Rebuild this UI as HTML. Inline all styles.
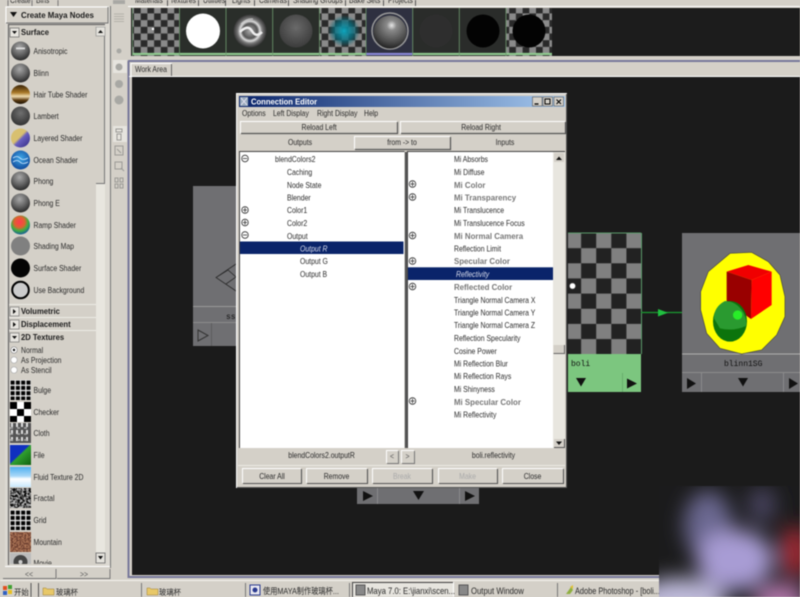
<!DOCTYPE html>
<html><head><meta charset="utf-8"><style>
html,body{margin:0;padding:0;background:#d4d0c8;width:800px;height:597px;overflow:hidden}
svg{display:block;filter:blur(.4px)}
text{font-family:"Liberation Sans","Noto Sans CJK SC",sans-serif;font-size:8.3px;fill:#2a2a2a;transform-box:fill-box;transform-origin:0 50%;transform:scaleX(.83)}
text.b{font-weight:bold;transform:scaleX(.92);fill:#1c1c1c}
text.g{font-weight:bold;fill:#777;transform:scaleX(.95)}
text.w{fill:#d8dcec;font-style:italic}
text.m{font-family:"Liberation Mono",monospace;font-size:8px;transform:none;fill:#111}
text.c{text-anchor:middle;transform-origin:50% 50%}
text.cjk{font-size:8px;transform:scaleX(.92)}
</style></head><body>
<svg width="800" height="597" viewBox="0 0 800 597" xmlns="http://www.w3.org/2000/svg">
<defs>
<radialGradient id="s1" cx=".45" cy=".3" r=".75"><stop offset="0" stop-color="#a8a8a8"/><stop offset=".55" stop-color="#606060"/><stop offset="1" stop-color="#202020"/></radialGradient>
<radialGradient id="s2" cx=".5" cy=".35" r=".7"><stop offset="0" stop-color="#707070"/><stop offset="1" stop-color="#2e2e2e"/></radialGradient>
<linearGradient id="hair" x1="0" y1="0" x2="0" y2="1"><stop offset="0" stop-color="#3a2408"/><stop offset=".4" stop-color="#a87828"/><stop offset=".6" stop-color="#f0dcb0"/><stop offset=".8" stop-color="#5a3a10"/><stop offset="1" stop-color="#1a1004"/></linearGradient>
<linearGradient id="lay" x1="0" y1="0" x2="1" y2="1"><stop offset="0" stop-color="#d8c070"/><stop offset=".45" stop-color="#d8c070"/><stop offset=".55" stop-color="#6a60c0"/><stop offset="1" stop-color="#302880"/></linearGradient>
<radialGradient id="ocean" cx=".5" cy=".4" r=".7"><stop offset="0" stop-color="#40a8e8"/><stop offset="1" stop-color="#0a3c90"/></radialGradient>
<radialGradient id="ramp" cx=".45" cy=".35" r=".7"><stop offset="0" stop-color="#ff3a50"/><stop offset=".4" stop-color="#e06030"/><stop offset=".65" stop-color="#40b040"/><stop offset="1" stop-color="#1048b0"/></radialGradient>
<radialGradient id="sw" cx=".55" cy=".3" r=".75"><stop offset="0" stop-color="#e8e8e8"/><stop offset=".2" stop-color="#8a8a8a"/><stop offset=".7" stop-color="#484848"/><stop offset="1" stop-color="#181818"/></radialGradient>
<radialGradient id="sg" cx=".5" cy=".4" r=".6"><stop offset="0" stop-color="#6a6a6a"/><stop offset="1" stop-color="#3c3c3c"/></radialGradient>
<radialGradient id="teal" cx=".5" cy=".5" r=".5"><stop offset="0" stop-color="#10a8c0"/><stop offset=".6" stop-color="#0a6a7a" stop-opacity=".8"/><stop offset="1" stop-color="#0a6a7a" stop-opacity="0"/></radialGradient>
<radialGradient id="env" cx=".5" cy=".5" r=".5"><stop offset="0" stop-color="#aaa"/><stop offset=".45" stop-color="#555"/><stop offset=".6" stop-color="#ddd"/><stop offset=".75" stop-color="#777"/><stop offset="1" stop-color="#333"/></radialGradient>
<linearGradient id="title" x1="0" y1="0" x2="1" y2="0"><stop offset="0" stop-color="#0a246a"/><stop offset="1" stop-color="#a6caf0"/></linearGradient>
<linearGradient id="file" x1="0" y1="0" x2="1" y2="1"><stop offset="0" stop-color="#1030c0"/><stop offset=".45" stop-color="#1030c0"/><stop offset=".5" stop-color="#30a030"/><stop offset="1" stop-color="#106010"/></linearGradient>
<linearGradient id="fluid" x1="0" y1="0" x2="0" y2="1"><stop offset="0" stop-color="#50b0f0"/><stop offset=".45" stop-color="#a8d8f8"/><stop offset=".6" stop-color="#fff"/><stop offset="1" stop-color="#c8e8fc"/></linearGradient>
<pattern id="ck" x="568" y="233" width="30.2" height="30.3" patternUnits="userSpaceOnUse"><rect width="30.2" height="30.3" fill="#222"/><rect x="-2" width="15.1" height="15.15" fill="#808080"/><rect x="28.2" width="2" height="15.15" fill="#808080"/><rect x="13.1" y="15.15" width="15.1" height="15.15" fill="#808080"/></pattern>
<pattern id="ckS" width="13.4" height="13.4" patternUnits="userSpaceOnUse"><rect width="13.4" height="13.4" fill="#2a2a2a"/><rect width="6.7" height="6.7" fill="#8a8a8a"/><rect x="6.7" y="6.7" width="6.7" height="6.7" fill="#8a8a8a"/></pattern>
<pattern id="ckT" x="10" y="402" width="14" height="14" patternUnits="userSpaceOnUse"><rect width="14" height="14" fill="#fff"/><rect width="7" height="7" fill="#000"/><rect x="7" y="7" width="7" height="7" fill="#000"/></pattern>
<pattern id="grid" x="10" y="380" width="5.3" height="5.3" patternUnits="userSpaceOnUse"><rect width="5.3" height="5.3" fill="#eee"/><rect x=".6" y=".6" width="4" height="4" fill="#000"/></pattern>
<pattern id="grid2" x="10" y="510" width="5.3" height="5.3" patternUnits="userSpaceOnUse"><rect width="5.3" height="5.3" fill="#eee"/><rect x=".6" y=".6" width="4" height="4" fill="#000"/></pattern>
<filter id="noise1" x="0" y="0" width="100%" height="100%"><feTurbulence type="fractalNoise" baseFrequency=".45" numOctaves="2" seed="3"/><feColorMatrix values="0 0 0 0 0 0 0 0 0 0 0 0 0 0 0 3 0 0 0 -1"/></filter>
<filter id="noise2" x="0" y="0" width="100%" height="100%"><feTurbulence type="fractalNoise" baseFrequency=".6" numOctaves="2" seed="8"/><feColorMatrix values="0 0 0 0 .15 0 0 0 0 .05 0 0 0 0 .03 4 0 0 0 -1.5"/></filter>
<filter id="bl" x="-50%" y="-50%" width="200%" height="200%"><feGaussianBlur stdDeviation="10"/></filter>
<clipPath id="blc"><rect x="659" y="486" width="141" height="111"/></clipPath>
<clipPath id="lst"><rect x="5" y="26" width="91" height="538"/></clipPath>
<g id="pl"><circle r="3.3" fill="#fff" stroke="#333" stroke-width=".8"/><path d="M-2.2 0H2.2M0-2.2V2.2" stroke="#333" stroke-width=".8"/></g>
<g id="mn"><circle r="3.3" fill="#fff" stroke="#333" stroke-width=".8"/><path d="M-2.2 0H2.2" stroke="#333" stroke-width=".8"/></g>
</defs>

<rect width="800" height="597" fill="#d4d0c8"/>

<!-- top-left tabs -->
<path d="M8 6V0M32 6V0M58 6V0" stroke="#777" fill="none"/>
<text x="10" y="3">Create</text><text x="36" y="3">Bins</text>

<!-- left panel -->
<rect x="5" y="6" width="105" height="561" fill="#dcd9d2"/>
<rect x="6" y="7" width="102" height="16" fill="#d4d0c8" stroke="#fff"/>
<path d="M6 23H108V7" stroke="#777" fill="none"/>
<path d="M10 12h7l-3.5 5z" fill="#111"/>
<text class="b" x="21" y="18" style="font-size:8.6px">Create Maya Nodes</text>
<rect x="8" y="25" width="97" height="540" fill="#d4d0c8"/>
<path d="M8.5 565V24.5H105" stroke="#666" fill="none" stroke-width="1.2"/>
<path d="M5 566.5H110" stroke="#fff"/><path d="M110.5 6V568" stroke="#777"/>
<rect x="10" y="28" width="9" height="9" fill="#e8e6e0" stroke="#666" stroke-width=".7"/><path d="M12 31h5l-2.5 3z" fill="#111"/>
<text class="b" x="21" y="35">Surface</text>

<!-- scrollbar -->
<rect x="96" y="26" width="9" height="538" fill="#e8e6df"/>
<rect x="96" y="36" width="9" height="147" fill="#d4d0c8"/><path d="M96 183.5H105M104.5 36V183" stroke="#777"/>
<rect x="96" y="27" width="9" height="9" fill="#e4e2dc" stroke="#888" stroke-width=".6"/><path d="M98 33h5l-2.5-3z" fill="#111"/>
<rect x="96" y="553" width="9" height="10" fill="#e4e2dc" stroke="#666" stroke-width=".8"/><path d="M98 556h5l-2.5 3.5z" fill="#111"/>

<!-- shaders -->
<circle cx="20.5" cy="51" r="9.5" fill="url(#s1)"/><rect x="16" y="47.5" width="9" height="1.8" fill="#ddd"/>
<circle cx="20.5" cy="73" r="9.5" fill="url(#s1)"/>
<circle cx="20.5" cy="94.5" r="9.5" fill="url(#hair)"/>
<circle cx="20.5" cy="116" r="9.5" fill="url(#s2)"/>
<circle cx="20.5" cy="138" r="9.5" fill="url(#lay)"/>
<circle cx="20.5" cy="160" r="9.5" fill="url(#ocean)"/><path d="M13 158q4-3 7 0t8 0M13 162q4-3 7 0t8 0" stroke="#cfe8ff" fill="none" stroke-width=".8"/>
<circle cx="20.5" cy="181" r="9.5" fill="url(#s1)"/>
<circle cx="20.5" cy="203" r="9.5" fill="url(#s1)"/>
<circle cx="20.5" cy="225" r="9.5" fill="url(#ramp)"/>
<circle cx="20.5" cy="246" r="9.5" fill="#808080"/>
<circle cx="20.5" cy="268" r="9.5" fill="#050505"/>
<circle cx="20.5" cy="290" r="8.3" fill="#ccc" stroke="#000" stroke-width="2"/>
<text x="33.5" y="54">Anisotropic</text><text x="33.5" y="76">Blinn</text><text x="33.5" y="97.5">Hair Tube Shader</text><text x="33.5" y="119">Lambert</text><text x="33.5" y="141">Layered Shader</text><text x="33.5" y="163">Ocean Shader</text><text x="33.5" y="184">Phong</text><text x="33.5" y="206">Phong E</text><text x="33.5" y="228">Ramp Shader</text><text x="33.5" y="249">Shading Map</text><text x="33.5" y="271">Surface Shader</text><text x="33.5" y="293">Use Background</text>

<!-- sections -->
<rect x="9" y="305" width="87" height="12" fill="#d4d0c8"/><path d="M9 304.5H96M9 317.5H96" stroke="#ecebe6"/>
<path d="M9 330.5H96" stroke="#ecebe6"/>
<rect x="10" y="307" width="9" height="9" fill="#e8e6e0" stroke="#777" stroke-width=".7"/><path d="M13 309l3 2.5-3 2.500z" fill="#111"/>
<rect x="10" y="320" width="9" height="9" fill="#e8e6e0" stroke="#777" stroke-width=".7"/><path d="M13 322l3 2.5-3 2.500z" fill="#111"/>
<rect x="10" y="333" width="9" height="9" fill="#e8e6e0" stroke="#777" stroke-width=".7"/><path d="M12 336h5l-2.5 3z" fill="#111"/>
<text class="b" x="21" y="314">Volumetric</text><text class="b" x="21" y="327">Displacement</text><text class="b" x="21" y="340">2D Textures</text>
<circle cx="14" cy="350" r="3.2" fill="#fff" stroke="#888" stroke-width=".7"/><circle cx="14" cy="350" r="1.2" fill="#111"/>
<circle cx="14" cy="360" r="3.2" fill="#fff" stroke="#aaa" stroke-width=".7"/>
<circle cx="14" cy="370" r="3.2" fill="#fff" stroke="#aaa" stroke-width=".7"/>
<text x="21" y="353">Normal</text><text x="21" y="363">As Projection</text><text x="21" y="373">As Stencil</text>

<!-- textures -->
<rect x="10" y="380" width="21" height="20" fill="url(#grid)"/>
<rect x="10" y="402" width="21" height="20" fill="url(#ckT)"/>
<rect x="10" y="423" width="21" height="20" fill="#555"/><path d="M12 423v20M17 423v20M22 423v20M27 423v20" stroke="#ddd" stroke-width="2" stroke-dasharray="4 3"/><path d="M10 428h21M10 434h21M10 440h21" stroke="#aaa" stroke-width="1.5" stroke-dasharray="3 4"/>
<rect x="10" y="445" width="21" height="20" fill="url(#file)"/>
<rect x="10" y="467" width="21" height="20" fill="url(#fluid)"/>
<rect x="10" y="488" width="21" height="20" fill="#bbb"/><rect x="10" y="488" width="21" height="20" filter="url(#noise1)"/>
<rect x="10" y="510" width="21" height="20" fill="url(#grid2)"/>
<rect x="10" y="532" width="21" height="20" fill="#b07858"/><rect x="10" y="532" width="21" height="20" filter="url(#noise2)"/>
<g clip-path="url(#lst)"><rect x="10" y="553" width="21" height="14" fill="#bbb"/><circle cx="20.5" cy="562" r="7" fill="#444"/><circle cx="20.5" cy="562" r="2" fill="#ccc"/></g>
<text x="33.5" y="393">Bulge</text><text x="33.5" y="415">Checker</text><text x="33.5" y="436">Cloth</text><text x="33.5" y="458">File</text><text x="33.5" y="480">Fluid Texture 2D</text><text x="33.5" y="501">Fractal</text><text x="33.5" y="523">Grid</text><text x="33.5" y="545">Mountain</text>
<g clip-path="url(#lst)"><text x="33.5" y="566">Movie</text></g>

<!-- << >> -->
<rect x="3" y="569" width="53" height="9" fill="#d4d0c8"/><path d="M3 578.5H56V569M57 578.5H110V569" stroke="#777" fill="none"/>
<text class="c" x="29" y="577" style="fill:#555">&lt;&lt;</text><text class="c" x="84" y="577" style="fill:#555">&gt;&gt;</text>

<!-- toolbar -->
<rect x="113" y="60" width="14" height="13" fill="#e6e4de"/>
<rect x="113" y="126" width="14" height="16" fill="#e6e4de"/>
<g fill="#a8a8a4"><rect x="113" y="0" width="12" height="4"/><circle cx="119" cy="51" r="2.5"/><circle cx="119" cy="67" r="3.5"/><circle cx="119" cy="84" r="4"/><circle cx="119" cy="100" r="4.5"/></g>
<path d="M114 14h10M114 16.500h10M114 19h10M114 21.500h10" stroke="#b4b2aa"/>
<g stroke="#9a9a96" fill="none"><path d="M116 129h6v3h-6zM117 134h4v6h-4z"/><path d="M115 146h8v9h-8zM117 149l4 4"/><path d="M115 162h7v7h-7zM121 168l3 3"/><path d="M115 178h3v4h-3zM120 178h3v4h-3zM115 184h3v4h-3zM120 184h3v4h-3z"/></g>

<!-- top tabs -->
<g><text x="135" y="3">Materials</text><text x="170" y="3">Textures</text><text x="203" y="3">Utilities</text><text x="232" y="3">Lights</text><text x="259" y="3">Cameras</text><text x="293" y="3">Shading Groups</text><text x="349" y="3">Bake Sets</text><text x="388" y="3">Projects</text></g>
<path d="M167.5 0V6M198.5 0V6M225.5 0V6M254.5 0V6M288.5 0V6M345.5 0V6M383.5 0V6M415.5 0V6" stroke="#555"/>
<path d="M128 6.5H800" stroke="#fff"/>

<!-- swatches -->
<rect x="131" y="8" width="669" height="48" fill="#1c1c1c"/>
<g>
<rect x="132" y="8" width="47" height="48" fill="url(#ckS)"/>
<rect x="179" y="8" width="47" height="48" fill="#2a2e2a"/><ellipse cx="203" cy="31" rx="17" ry="17.5" fill="#fff"/>
<rect x="226" y="8" width="47" height="48" fill="#2a2e2a"/><circle cx="250" cy="31" r="16.5" fill="url(#env)"/><path d="M240 32q8-8 12-1t10 1" stroke="#eee" stroke-width="2.5" fill="none"/><path d="M241 24q6-6 12-5" stroke="#ccc" fill="none"/>
<rect x="273" y="8" width="46" height="48" fill="#2a2e2a"/><circle cx="296" cy="31" r="16.5" fill="url(#sg)"/>
<rect x="319" y="8" width="47" height="48" fill="url(#ckS)"/><circle cx="344" cy="31" r="16" fill="url(#teal)"/>
<rect x="366" y="8" width="47" height="48" fill="#2e3040"/><circle cx="390" cy="31" r="18" fill="none" stroke="#9a9a9a" stroke-width="1.5"/><circle cx="390" cy="32" r="16.5" fill="url(#sw)"/>
<rect x="413" y="8" width="46" height="48" fill="#2a2c2a"/><circle cx="436" cy="31" r="16.5" fill="#2e2e2e"/>
<rect x="459" y="8" width="47" height="48" fill="#2a2c2a"/><circle cx="483" cy="31" r="16.5" fill="#030303"/>
<rect x="506" y="8" width="46" height="48" fill="url(#ckS)"/><circle cx="529" cy="31" r="16.5" fill="#030303"/>
</g>
<circle cx="153" cy="29" r="1.2" fill="#fff"/>
<path d="M132 54H366M413 54H552" stroke="#8fc98f" stroke-width="2.2"/><path d="M366 54H413" stroke="#8a88d8" stroke-width="2.2"/>
<path d="M132.5 8V56M179.5 8V56M226 8V56M272.7 8V56M319.5 8V56M366 8V56M412.7 8V56M459.3 8V56M506 8V56" stroke="#6f9a6f" stroke-width=".8"/>

<!-- work area -->
<path d="M128 61H800M128.5 61V577H660" stroke="#77789a" stroke-width="2" fill="none"/>
<rect x="129.5" y="62" width="671" height="14" fill="#d4d0c8"/>
<path d="M131 76V63.5H171.5V76" stroke="#fff" fill="none"/><path d="M171.5 64V76" stroke="#666"/>
<text x="135" y="72">Work Area</text>
<path d="M129 76.5H800" stroke="#fff"/>
<rect x="132" y="77" width="668" height="498" fill="#1b1b1b"/>

<!-- left node -->
<rect x="193" y="186" width="50" height="160" fill="#6f6f72"/>
<path d="M193 306.5H243" stroke="#9a9a9a"/><path d="M193 322.5H243" stroke="#8c8c8c"/><path d="M211.5 323V346" stroke="#5c5c5e"/>
<path d="M236 264L216 277.5L236 291M216 277.5L228 270L236 277L226 284" stroke="#2a2a2a" fill="none" stroke-width=".8"/>
<text class="m" x="226" y="319">ss</text>
<path d="M198 330l10 5.5-10 5.500z" fill="none" stroke="#333"/>

<!-- bottom middle node -->
<rect x="357" y="486" width="122" height="18" fill="#6f6f72"/>
<path d="M377.5 488V504M459.5 488V504" stroke="#8a8a8c"/>
<path d="M363 491l10 5-10 5zM465 491l10 5-10 5z" fill="#111"/><path d="M413 491h11l-5.5 9z" fill="#111"/>

<!-- boli node -->
<rect x="568" y="233" width="73.500" height="121" fill="url(#ck)"/>
<path d="M641.5 233V354" stroke="#5a9a6a"/><path d="M568 233H641" stroke="#5a9a6a"/>
<circle cx="572.5" cy="286" r="3" fill="#fff" stroke="#666" stroke-width=".5"/>
<rect x="568" y="354" width="73" height="38" fill="#7cc67f"/>
<path d="M622.5 373V392" stroke="#68ad6c"/>
<text class="m" x="571" y="366">boli</text>
<path d="M576 378h10l-5 8.5zM627 378.5l10 5-10 5z" fill="#111"/>

<!-- connection -->
<path d="M641 312.5H682" stroke="#1a9a30" stroke-width="1.2"/><path d="M658 309v7.5l10-3.700z" fill="#20c040"/>

<!-- blinn node -->
<rect x="682" y="233" width="118" height="159" fill="#6f6f72"/>
<path d="M682 354H800" stroke="#b0b0b0"/><path d="M682 372.5H800" stroke="#8c8c8c"/>
<path d="M701.5 373V392M783.5 373V392" stroke="#8a8a8c"/>
<text class="m" x="724" y="366">blinn1SG</text>
<path d="M687 378l9 5.5-9 5.500zM789 378l9 5.5-9 5.500zM738 378h10l-5 8.500z" fill="#111"/>
<g transform="translate(560 220) scale(.3333)">
<path d="M510 100L575 97L625 125L660 165L675 230L675 290L650 345L605 390L545 402L480 385L440 340L422 270L422 215L445 155Z" fill="#ffff00" stroke="#444" stroke-width="2"/>
<path d="M500 155L565 135L635 155L575 180Z" fill="#f00000"/>
<path d="M575 180L635 155L635 255L573 297Z" fill="#ff0000"/>
<path d="M500 155L575 180L573 297L500 245Z" fill="#990000"/>
<ellipse cx="510" cy="304" rx="51" ry="61" fill="#0c740c"/>
<path d="M495 243Q530 243 552 280Q562 305 558 318Q520 335 480 325L462 295Q462 260 495 243Z" fill="#2a9a30"/>
<circle cx="533" cy="285" r="14" fill="#28ee28"/>
</g>

<!-- dialog -->
<rect x="236" y="93" width="331" height="395" fill="#d4d0c8"/>
<path d="M236.5 488V93.5H566.5" stroke="#fff" fill="none"/><path d="M566.5 94V487.5H237" stroke="#555" fill="none"/>
<rect x="239" y="96" width="326" height="11" fill="url(#title)"/>
<text x="251" y="104.5" style="fill:#fff;font-weight:bold;transform:scaleX(.92)">Connection Editor</text>
<rect x="240" y="97" width="8" height="9" fill="#9ab"/><path d="M241 98l6 7M247 98l-6 7" stroke="#dde" fill="none"/>
<g fill="#d4d0c8" stroke="#555" stroke-width=".6"><rect x="532.5" y="97" width="9.5" height="9"/><rect x="543" y="97" width="9.5" height="9"/><rect x="554" y="97" width="9.5" height="9"/></g>
<path d="M534.5 104h4" stroke="#000" stroke-width="1.3"/><rect x="545" y="99" width="5" height="5" fill="none" stroke="#000"/><path d="M556.5 99.5l4.5 4.500M561 99.5l-4.5 4.500" stroke="#000"/>
<text x="242" y="116">Options</text><text x="273" y="116">Left Display</text><text x="317" y="116">Right Display</text><text x="364" y="116">Help</text>

<!-- reload -->
<g fill="#d4d0c8"><rect x="240.5" y="121.5" width="157" height="12"/><rect x="400.5" y="121.5" width="165" height="12"/><rect x="354.5" y="136.5" width="96" height="13"/></g>
<path d="M240.5 133.5V121.5H397M400.5 133.5V121.5H565M354.5 149V136.5H450" stroke="#fff" fill="none"/>
<path d="M241 133.5H397.5V122M401 133.5H565.5V122M355 149.5H450.5V137" stroke="#555" fill="none" stroke-width="1.2"/>
<text class="c" x="319" y="130">Reload Left</text><text class="c" x="481" y="130">Reload Right</text>
<text class="c" x="300" y="145">Outputs</text><text class="c" x="402" y="145">from -&gt; to</text><text class="c" x="505" y="145">Inputs</text>

<!-- lists -->
<rect x="240" y="152" width="164.5" height="296" fill="#fff"/>
<rect x="408" y="152" width="145" height="296" fill="#fff"/>
<path d="M239.5 448V151.5H404.5" stroke="#444" fill="none"/><path d="M407.5 448V151.5H565" stroke="#444" fill="none"/>
<path d="M406 152V448" stroke="#555" stroke-width="2.4"/>
<rect x="553" y="152" width="12" height="296" fill="#e8e6df"/>
<rect x="554" y="153" width="10" height="9" fill="#d4d0c8"/><path d="M556 160h6l-3-3.5z" fill="#111"/>
<rect x="553.5" y="345" width="11" height="9" fill="#d4d0c8"/><path d="M553.5 353.5H565M564.5 345V354" stroke="#666"/>
<rect x="554" y="439" width="10" height="8" fill="#d4d0c8"/><path d="M564.5 439V447.5H554" stroke="#555" fill="none"/><path d="M556 441.5h6l-3 3.500z" fill="#111"/>
<rect x="240" y="241.5" width="163.5" height="12.5" fill="#0a246a"/>
<rect x="408" y="267.3" width="145" height="12.7" fill="#0a246a"/>

<!-- left list -->
<text x="275" y="162">blendColors2</text><text x="287" y="175">Caching</text><text x="287" y="188">Node State</text><text x="287" y="200.6">Blender</text><text x="287" y="213">Color1</text><text x="287" y="226">Color2</text><text x="287" y="239">Output</text>
<text class="w" x="300" y="251.5">Output R</text><text x="300" y="264">Output G</text><text x="300" y="277">Output B</text>
<use href="#mn" x="245" y="158.5"/><use href="#pl" x="245" y="210"/><use href="#pl" x="245" y="222.5"/><use href="#mn" x="245" y="235"/>

<!-- right list -->
<text x="454" y="162">Mi Absorbs</text><text x="454" y="175">Mi Diffuse</text><text class="g" x="454" y="188">Mi Color</text><text class="g" x="454" y="200.6">Mi Transparency</text><text x="454" y="213">Mi Translucence</text><text x="454" y="226">Mi Translucence Focus</text><text class="g" x="454" y="239">Mi Normal Camera</text><text x="454" y="251.5">Reflection Limit</text><text class="g" x="454" y="264">Specular Color</text><text class="w" x="456" y="277">Reflectivity</text><text class="g" x="454" y="290">Reflected Color</text><text x="454" y="303">Triangle Normal Camera X</text><text x="454" y="315.5">Triangle Normal Camera Y</text><text x="454" y="328">Triangle Normal Camera Z</text><text x="454" y="341">Reflection Specularity</text><text x="454" y="354">Cosine Power</text><text x="454" y="366.6">Mi Reflection Blur</text><text x="454" y="379">Mi Reflection Rays</text><text x="454" y="392">Mi Shinyness</text><text class="g" x="454" y="405">Mi Specular Color</text><text x="454" y="417.7">Mi Reflectivity</text>
<use href="#pl" x="412.5" y="184"/><use href="#pl" x="412.5" y="197"/><use href="#pl" x="412.5" y="235.5"/><use href="#pl" x="412.5" y="261"/><use href="#pl" x="412.5" y="286.5"/><use href="#pl" x="412.5" y="401"/>

<!-- status -->
<text class="c" x="321.5" y="458">blendColors2.outputR</text><text class="c" x="493.5" y="458">boli.reflectivity</text>
<path d="M386.5 463V450.5H398M401.5 463V450.5H414" stroke="#fff" fill="none"/><path d="M387 463.5H398.5V451M402 463.5H414.5V451" stroke="#777" fill="none"/>
<text class="c" x="392" y="459" style="fill:#555">&lt;</text><text class="c" x="407.5" y="459" style="fill:#555">&gt;</text>
<path d="M238 465.5H565" stroke="#eceae4"/>

<!-- buttons -->
<path d="M242.5 483V468.5H301M306.5 483V468.5H367M372.5 483V468.5H432M438.5 483V468.5H497M502.5 483V468.5H563" stroke="#fff" fill="none"/>
<path d="M243 483.5H301.5V469M307 483.5H367.5V469M373 483.5H432.5V469M439 483.5H497.5V469M503 483.5H563.5V469" stroke="#555" fill="none" stroke-width="1.1"/>
<text class="c" x="272" y="479">Clear All</text><text class="c" x="336.5" y="479">Remove</text><text class="c" x="402" y="479" style="fill:#aaa">Break</text><text class="c" x="467.5" y="479" style="fill:#aaa">Make</text><text class="c" x="532.5" y="479">Close</text>

<!-- taskbar -->
<rect x="0" y="581" width="800" height="16" fill="#d4d0c8"/>
<path d="M0 580.5H660" stroke="#f4f3ee"/>
<rect x="3" y="586" width="4" height="4" fill="#e05020"/><rect x="8" y="585" width="4" height="4" fill="#40a030"/><rect x="3" y="591" width="4" height="4" fill="#3060c0"/><rect x="8" y="590" width="4" height="4" fill="#e8c020"/>
<text class="cjk" x="14" y="595">开始</text>
<path d="M31 583V597M38.5 583V597" stroke="#555"/>
<g fill="#e8c868" stroke="#a08030" stroke-width=".5"><path d="M43 588h3l1 1h7v6H43z"/><path d="M147 588h3l1 1h7v6h-11z"/></g>
<text class="cjk" x="56" y="595">玻璃杯</text><text class="cjk" x="159" y="595">玻璃杯</text>
<path d="M141.5 583V597M245.5 583V597M349.5 583V597M557.5 583V597" stroke="#777"/>
<rect x="250" y="585" width="10" height="10" fill="#e8e8f0" stroke="#2a3a90"/><circle cx="255" cy="590" r="2.5" fill="#2a3a90"/>
<text x="263" y="594" style="font-size:8.5px;transform:scaleX(.85)">使用MAYA制作玻璃杯...</text>
<rect x="352" y="582" width="101" height="15" fill="#e6e4de"/><path d="M352.5 597V582.5H453" stroke="#444" fill="none"/><path d="M453.5 582V597" stroke="#fff"/>
<rect x="356" y="585" width="9" height="10" fill="#888" stroke="#555"/>
<text x="367" y="594" style="font-size:8.8px;transform:scaleX(.88)">Maya 7.0: E:\jianxi\scen...</text>
<rect x="459" y="585" width="9" height="10" fill="#888" stroke="#555"/>
<text x="471" y="594" style="font-size:8.8px;transform:scaleX(.88)">Output Window</text>
<path d="M566 594l5-7 2 3-3 4z" fill="#90b040"/><path d="M570 587l3-2v4z" fill="#e0c030"/>
<text x="575" y="594" style="font-size:8.8px;transform:scaleX(.84)">Adobe Photoshop - [boli....</text>

<!-- blurred corner -->
<g clip-path="url(#blc)">
<rect x="659" y="486" width="141" height="111" fill="#1b1b1c"/>
<g filter="url(#bl)">
<ellipse cx="708" cy="525" rx="24" ry="34" fill="#6a6890"/>
<ellipse cx="762" cy="505" rx="14" ry="18" fill="#4a4460"/>
<ellipse cx="735" cy="560" rx="38" ry="30" fill="#a89cd4"/>
<ellipse cx="680" cy="602" rx="46" ry="24" fill="#c0bcdc"/>
<ellipse cx="795" cy="552" rx="15" ry="26" fill="#a02c34"/>
<ellipse cx="780" cy="600" rx="26" ry="16" fill="#b87ab0"/>
</g>
</g>
</svg>
</body></html>
